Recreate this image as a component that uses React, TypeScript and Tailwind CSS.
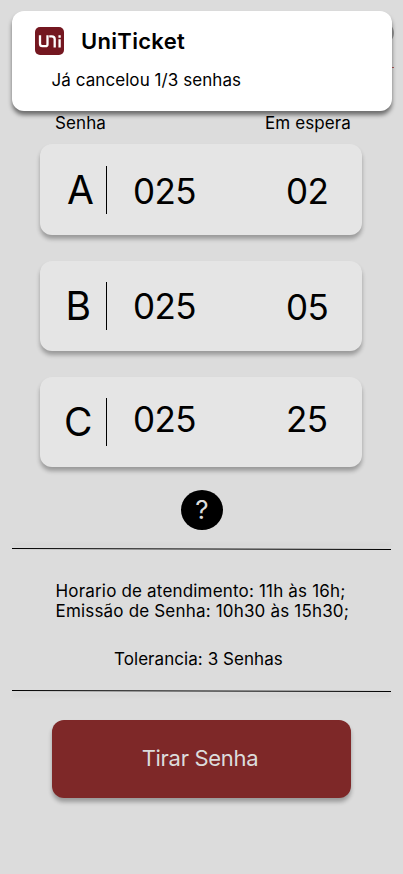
const queues = [
  { letter: 'A', current: '025', waiting: '02', card: 'mt-[8.5px] h-[91px]', letterPos: 'ml-[27px] pt-[21.5px]', bar: 'mt-[22.5px]', currentPos: 'pt-[25.5px]', waitingPos: 'pt-[25.5px]' },
  { letter: 'B', current: '025', waiting: '05', card: 'mt-[26px] h-[90.5px]', letterPos: 'ml-[25.5px] pt-[20.5px]', bar: 'mt-[21.5px]', currentPos: 'pt-[23px]', waitingPos: 'pt-[24px]' },
  { letter: 'C', current: '025', waiting: '25', card: 'mt-[26px] h-[90px]', letterPos: 'ml-[24px] pt-[20px]', bar: 'mt-[21px]', currentPos: 'pt-[20px]', waitingPos: 'pt-[20px]' },
];

function Logo() {
  return (
    <svg className="h-7 w-[29px] shrink-0" viewBox="0 0 29 28" fill="none" stroke="#fff" strokeWidth="2.3">
      <rect width="29" height="28" rx="5" fill="#741720" stroke="none" />
      <path d="M5 8.2v8.6q0 2.4 2.4 2.4h3.1q2 0 2-2V8.2" />
      <path d="M14.2 9.3h2.6q2.9 0 2.9 2.9v8.3" />
      <path d="M24.6 12.2v8.3M24.6 8.2v2.5" />
    </svg>
  );
}

function Notification() {
  return (
    <section className="absolute top-[11px] left-3 h-[99.5px] w-[380px] rounded-xl bg-white shadow-[0_4px_4px_rgba(0,0,0,0.5)]">
      <div className="flex items-center pt-4 pl-[23px]">
        <Logo />
        <h1 className="ml-[17px] text-[22px] leading-7 font-semibold tracking-[0.3px]">UniTicket</h1>
      </div>
      <p className="mt-[15px] pl-[39.5px] text-[17px] leading-[21px] tracking-[0.07px]">Já cancelou 1/3 senhas</p>
    </section>
  );
}

function Rule({ top, shade }: { top: string; shade: string }) {
  return (
    <div className={`mx-3 h-[2px] ${top} ${shade}`}>
      <svg className="block h-[2px] w-full" viewBox="0 0 380 2" preserveAspectRatio="none">
        <path d="M0 .5L380 1.5" stroke="#000" strokeWidth="1" />
      </svg>
    </div>
  );
}

export default function App() {
  return (
    <main className="relative flex h-[874px] w-[403px] flex-col overflow-hidden bg-[#dcdcdc] font-['Inter',sans-serif] text-black">
      <header className="h-[113px] shrink-0">
        <div className="flex justify-end pt-[22px] pr-[9px]">
          <span className="size-[22px] rounded-full bg-[#999]" />
        </div>
        <div className="mt-[23px] mr-[9px] ml-3 h-px bg-[#b55a5a]" />
      </header>
      <Notification />
      <div className="flex h-[22px] shrink-0 justify-between pr-[52px] pl-[55px] text-[17px] leading-5 tracking-[0.1px]">
        <span>Senha</span>
        <span>Em espera</span>
      </div>
      {queues.map((q) => (
        <section key={q.letter} className={`mx-10 flex w-[321.5px] shrink-0 rounded-xl bg-[#e5e5e5] shadow-[0_4px_4px_rgba(0,0,0,0.3)] ${q.card}`}>
          <div className="flex w-[66px] shrink-0">
            <span className={`text-[39px] leading-[50px] ${q.letterPos}`}>{q.letter}</span>
          </div>
          <div className={`h-12 w-px shrink-0 bg-black ${q.bar}`} />
          <span className={`ml-[26px] w-[153px] shrink-0 text-[35px] leading-[44px] tracking-[-0.6px] ${q.currentPos}`}>{q.current}</span>
          <span className={`text-[35px] leading-[44px] tracking-[-0.6px] ${q.waitingPos}`}>{q.waiting}</span>
        </section>
      ))}
      <button className="mt-[23px] ml-[181px] flex h-10 w-[42px] shrink-0 items-center justify-center rounded-[50%] bg-black text-[26px] leading-none text-[#dcdcdc]">?</button>
      <Rule top="mt-[18px] shrink-0" shade="shadow-[0_-4px_4px_rgba(0,0,0,0.05)]" />
      <div className="h-[140px] shrink-0 pt-[31px] text-[17px] leading-[20px] tracking-[0.18px]">
        <p className="pl-[55.5px]">Horario de atendimento: 11h às 16h;</p>
        <p className="pl-[55.5px]">Emissão de Senha: 10h30 às 15h30;</p>
        <p className="mt-7 pl-[114px] tracking-[0.06px]">Tolerancia: 3 Senhas</p>
      </div>
      <Rule top="shrink-0" shade="shadow-[0_4px_4px_rgba(0,0,0,0.05)]" />
      <button className="mt-[28px] ml-[52px] h-[78px] w-[299px] shrink-0 rounded-xl bg-[#7e2828] pr-[3px] pb-[2px] text-[22px] tracking-[-0.3px] text-[#dcdcdc] shadow-[0_4px_4px_rgba(0,0,0,0.3)]">Tirar Senha</button>
    </main>
  );
}
